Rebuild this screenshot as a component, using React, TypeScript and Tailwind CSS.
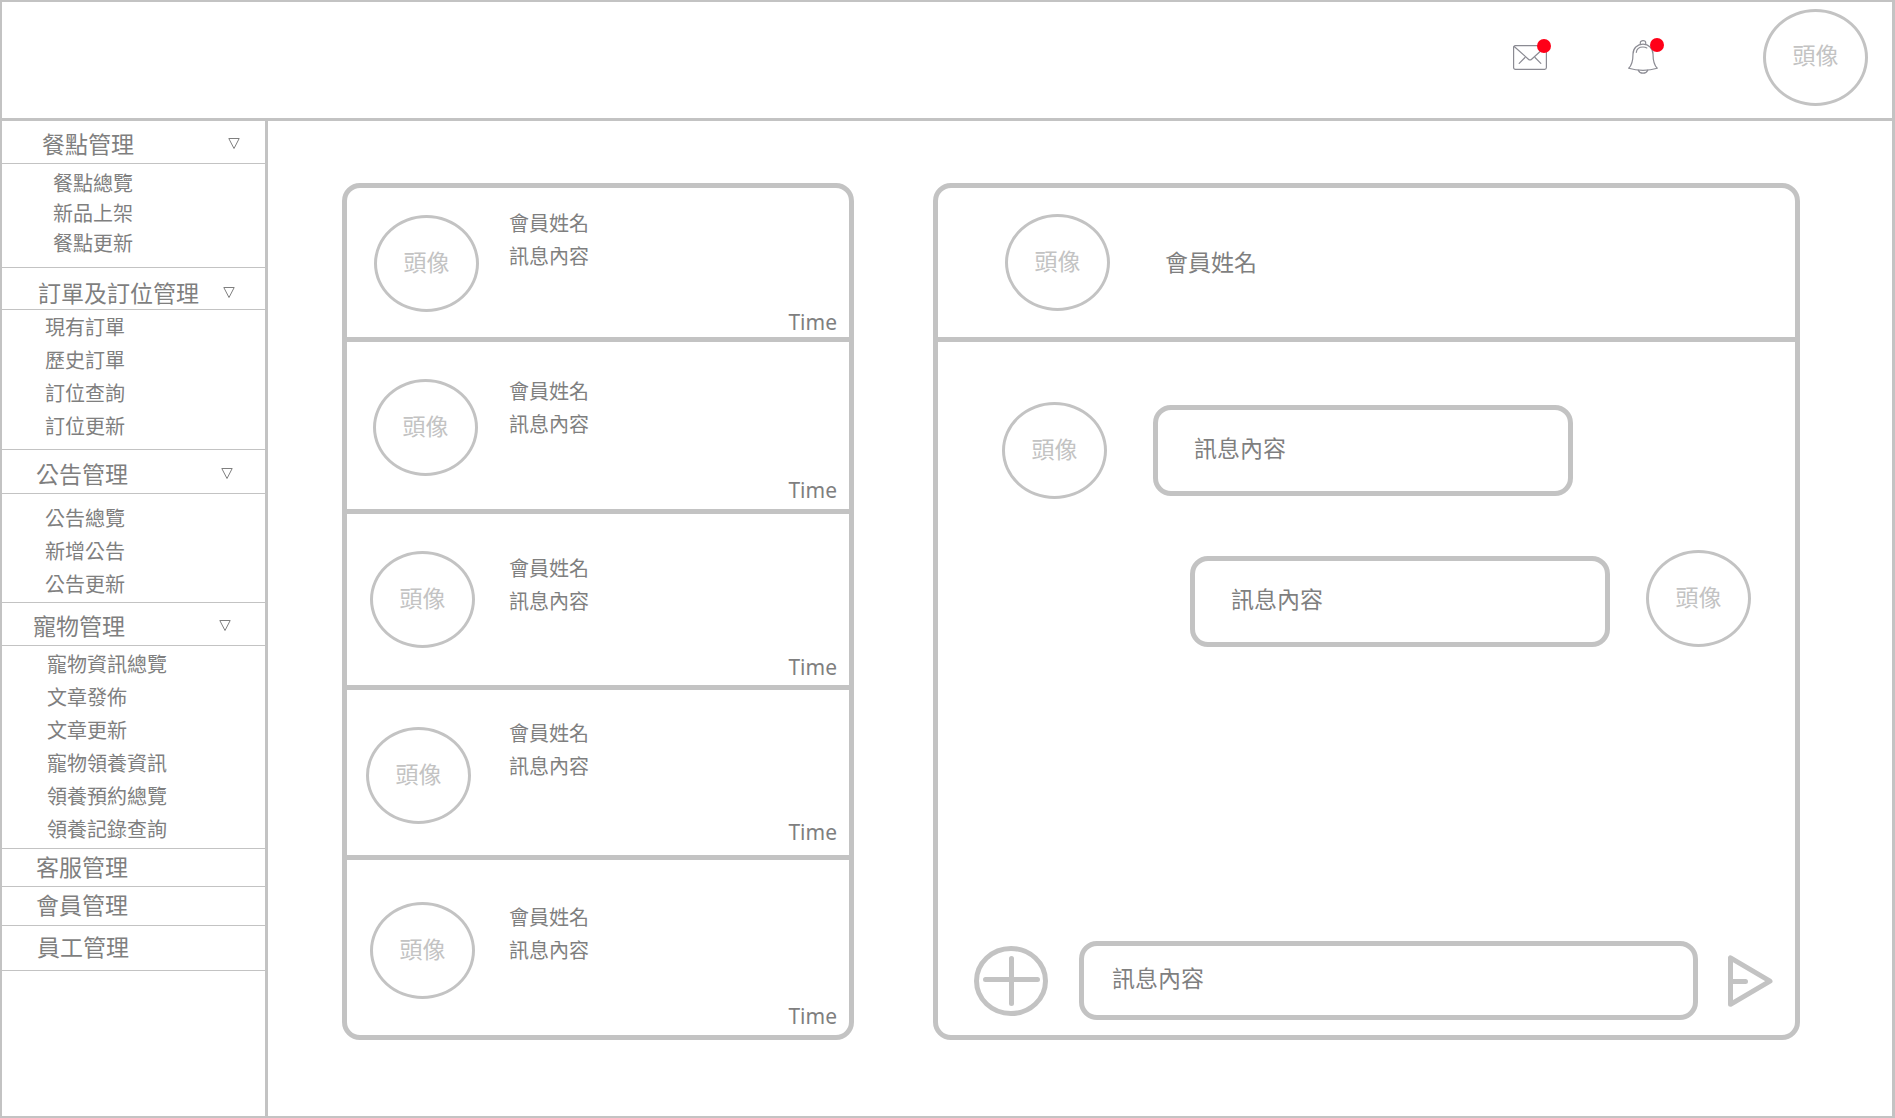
import { useState } from "react";

type Section = {
  title: string;
  headClass: string;
  arrowClass?: string;
  listClass?: string;
  itemClass?: string;
  items?: string[];
};

const sections: Section[] = [
  {
    title: "餐點管理",
    headClass: "h-[43px] pl-10 pt-0.5",
    arrowClass: "mr-[25px]",
    listClass: "pl-[51px] pt-1 pb-[9px]",
    itemClass: "leading-[30px]",
    items: ["餐點總覽", "新品上架", "餐點更新"],
  },
  {
    title: "訂單及訂位管理",
    headClass: "h-[42px] pl-9 pt-1.5",
    arrowClass: "mr-[30px]",
    listClass: "pl-[43px] pb-[7px]",
    itemClass: "leading-[33px]",
    items: ["現有訂單", "歷史訂單", "訂位查詢", "訂位更新"],
  },
  {
    title: "公告管理",
    headClass: "h-[44px] pl-[34px] pt-0.5",
    arrowClass: "mr-8",
    listClass: "pl-[43px] pt-[7px] pb-0.5",
    itemClass: "leading-[33px]",
    items: ["公告總覽", "新增公告", "公告更新"],
  },
  {
    title: "寵物管理",
    headClass: "h-[43px] pl-[31px] pt-0.5",
    arrowClass: "mr-[34px]",
    listClass: "pl-[45px] pt-px pb-[3px]",
    itemClass: "leading-[33px]",
    items: ["寵物資訊總覽", "文章發佈", "文章更新", "寵物領養資訊", "領養預約總覽", "領養記錄查詢"],
  },
  { title: "客服管理", headClass: "h-[38px] pl-[34px] pb-1" },
  { title: "會員管理", headClass: "h-[39px] pl-[34px] pb-1" },
  { title: "員工管理", headClass: "h-[45px] pl-[35px] pb-1" },
];

const conversations = [
  { row: "h-[154px]", avatar: "pt-[27px] pl-[27px]", text: "pt-[18px]", time: "pb-px" },
  { row: "h-[172px]", avatar: "pt-[37px] pl-[26px]", text: "pt-8", time: "pb-[5px]" },
  { row: "h-[176px]", avatar: "pt-[37px] pl-[23px]", text: "pt-[37px]", time: "pb-1" },
  { row: "h-[170px]", avatar: "pt-[37px] pl-[19px]", text: "pt-[26px]", time: "pb-[9px]" },
  { row: "h-[175px]", avatar: "pt-[42px] pl-[23px]", text: "pt-10", time: "pb-[5px]" },
];

function Avatar() {
  return (
    <span className="flex h-[97px] w-[105px] shrink-0 items-center justify-center rounded-[50%] border-3 border-[#c3c3c3] pb-1.5 text-[23px] leading-8 text-[#c3c3c3]">
      頭像
    </span>
  );
}

function MailIcon() {
  return (
    <svg width="34" height="25" viewBox="0 0 34 25" fill="none" stroke="#8b8b93" strokeWidth="1.2" strokeLinecap="round" strokeLinejoin="round">
      <rect x="0.6" y="0.6" width="32.8" height="23.8" rx="1.8" />
      <path d="M1.2 1.5 15.4 14.2c1 .9 2.2.9 3.2 0L32.6 1.5" />
      <path d="M12 12.5 6.2 18.4M22 12.5l5.8 5.9" />
    </svg>
  );
}

function BellIcon() {
  return (
    <svg width="30" height="34" viewBox="0 0 30 34" fill="none" stroke="#8b8b93" strokeWidth="1.2" strokeLinecap="round" strokeLinejoin="round">
      <path d="M15 4.2C9.2 4.2 5 8.3 5 14c0 7.500-1.200 11.300-4.300 14.300 4.300 1.300 9 2 14.300 2s10-.7 14.300-2C26.200 25.300 25 21.500 25 14c0-5.700-4.200-9.800-10-9.800Z" />
      <path d="M12.300 4.300V2.700C12.300 1.500 13.500.7 15 .7s2.700.8 2.700 2v1.600" />
      <path d="M8.300 12.300C8.700 9 11.300 7 15 7c1.500 0 2.800.3 3.800.9" />
      <path d="M10.300 30.200c.8 2 2.500 3 4.700 3s3.900-1 4.700-3" />
    </svg>
  );
}

function Sidebar() {
  const [closed, setClosed] = useState<string[]>([]);
  const toggle = (title: string) =>
    setClosed((c) => (c.includes(title) ? c.filter((t) => t !== title) : [...c, title]));

  return (
    <nav className="w-[266px] shrink-0 border-r-3 border-[#c3c3c3]">
      {sections.map((s) => (
        <div key={s.title}>
          <button
            type="button"
            onClick={() => toggle(s.title)}
            aria-expanded={s.items ? !closed.includes(s.title) : undefined}
            className={`flex w-full items-center justify-between border-b border-[#c3c3c3] text-[23px] leading-8 ${s.headClass}`}
          >
            <span>{s.title}</span>
            {s.items && (
              <svg className={s.arrowClass} width="12" height="12" viewBox="0 0 12 12" fill="none" stroke="#7f7f7f">
                <path d="M.8 1.500h10.400L6 11.500Z" />
              </svg>
            )}
          </button>
          {s.items && !closed.includes(s.title) && (
            <ul className={`border-b border-[#c3c3c3] text-xl ${s.listClass}`}>
              {s.items.map((item) => (
                <li key={item} className={s.itemClass}>
                  <a href="#">{item}</a>
                </li>
              ))}
            </ul>
          )}
        </div>
      ))}
    </nav>
  );
}

function ConversationList() {
  return (
    <ul className="divide-y-5 divide-[#c3c3c3] overflow-hidden rounded-[18px] border-5 border-[#c3c3c3]">
      {conversations.map((c, i) => (
        <li key={i} className={`flex border-[#c3c3c3] ${c.row}`}>
          <div className={`w-[162px] shrink-0 ${c.avatar}`}>
            <Avatar />
          </div>
          <div className={`text-xl ${c.text}`}>
            <p className="leading-[33px]">會員姓名</p>
            <p className="leading-[33px]">訊息內容</p>
          </div>
          <time className={`ml-auto self-end pr-3 font-['Noto_Sans'] text-[21px] leading-7 ${c.time}`}>Time</time>
        </li>
      ))}
    </ul>
  );
}

function Bubble({ text }: { text: string }) {
  return (
    <p className="flex h-[91px] w-[420px] items-center rounded-[18px] border-5 border-[#c3c3c3] pb-2 pl-9 text-[23px] leading-8">
      {text}
    </p>
  );
}

function Chat() {
  return (
    <section className="flex flex-col rounded-[18px] border-5 border-[#c3c3c3]">
      <header className="flex h-[154px] items-center gap-[55px] border-b-5 border-[#c3c3c3] pl-[67px]">
        <Avatar />
        <h2 className="pb-1 text-[23px] leading-8">會員姓名</h2>
      </header>
      <div className="flex flex-1 flex-col gap-[51px] pt-[60px]">
        <div className="flex items-center gap-[46px] pl-16">
          <Avatar />
          <Bubble text="訊息內容" />
        </div>
        <div className="flex items-end justify-end gap-9 pr-11">
          <Bubble text="訊息內容" />
          <Avatar />
        </div>
      </div>
      <form className="flex items-center pr-[22px] pb-[15px] pl-9" onSubmit={(e) => e.preventDefault()}>
        <button type="button" aria-label="新增附件" className="shrink-0">
          <svg width="74" height="70" viewBox="0 0 74 70" fill="none" stroke="#c3c3c3" strokeWidth="5" strokeLinecap="round">
            <ellipse cx="37" cy="35" rx="34.500" ry="32.500" />
            <path d="M11.500 33.500h52M37.500 12.500v45" />
          </svg>
        </button>
        <input
          type="text"
          aria-label="訊息內容"
          placeholder="訊息內容"
          className="mr-[30px] ml-[31px] h-[79px] min-w-0 flex-1 rounded-[18px] border-5 border-[#c3c3c3] pb-2 pl-7 text-[23px] leading-8 outline-none placeholder:text-[#7f7f7f]"
        />
        <button type="submit" aria-label="送出" className="shrink-0">
          <svg width="45" height="52" viewBox="0 0 45 52" fill="none" stroke="#c3c3c3" strokeWidth="5" strokeLinecap="round" strokeLinejoin="round">
            <path d="M2.500 2.800v46.500L42 26.200ZM2.500 26.500H17.500" />
          </svg>
        </button>
      </form>
    </section>
  );
}

export default function App() {
  return (
    <div className="flex min-h-screen flex-col border-2 border-r-3 border-[#c3c3c3] bg-white font-['Noto_Sans_CJK_TC',sans-serif] text-[#7f7f7f]">
      <header className="flex h-[119px] items-center justify-end border-b-3 border-[#c3c3c3] pr-6 pb-1.5">
        <button type="button" aria-label="訊息" className="relative mr-[81px]">
          <MailIcon />
          <span className="absolute -top-1.5 -right-1 h-3.5 w-3.5 rounded-full bg-[#ff0018]" />
        </button>
        <button type="button" aria-label="通知" className="relative mr-[105px]">
          <BellIcon />
          <span className="absolute -top-0.5 -right-1.5 h-3.5 w-3.5 rounded-full bg-[#ff0018]" />
        </button>
        <Avatar />
      </header>
      <div className="flex flex-1">
        <Sidebar />
        <main className="grid flex-1 grid-cols-[512fr_867fr] items-start gap-[79px] pt-[62px] pr-[92px] pb-[76px] pl-[74px]">
          <ConversationList />
          <div className="grid h-full">
            <Chat />
          </div>
        </main>
      </div>
    </div>
  );
}
